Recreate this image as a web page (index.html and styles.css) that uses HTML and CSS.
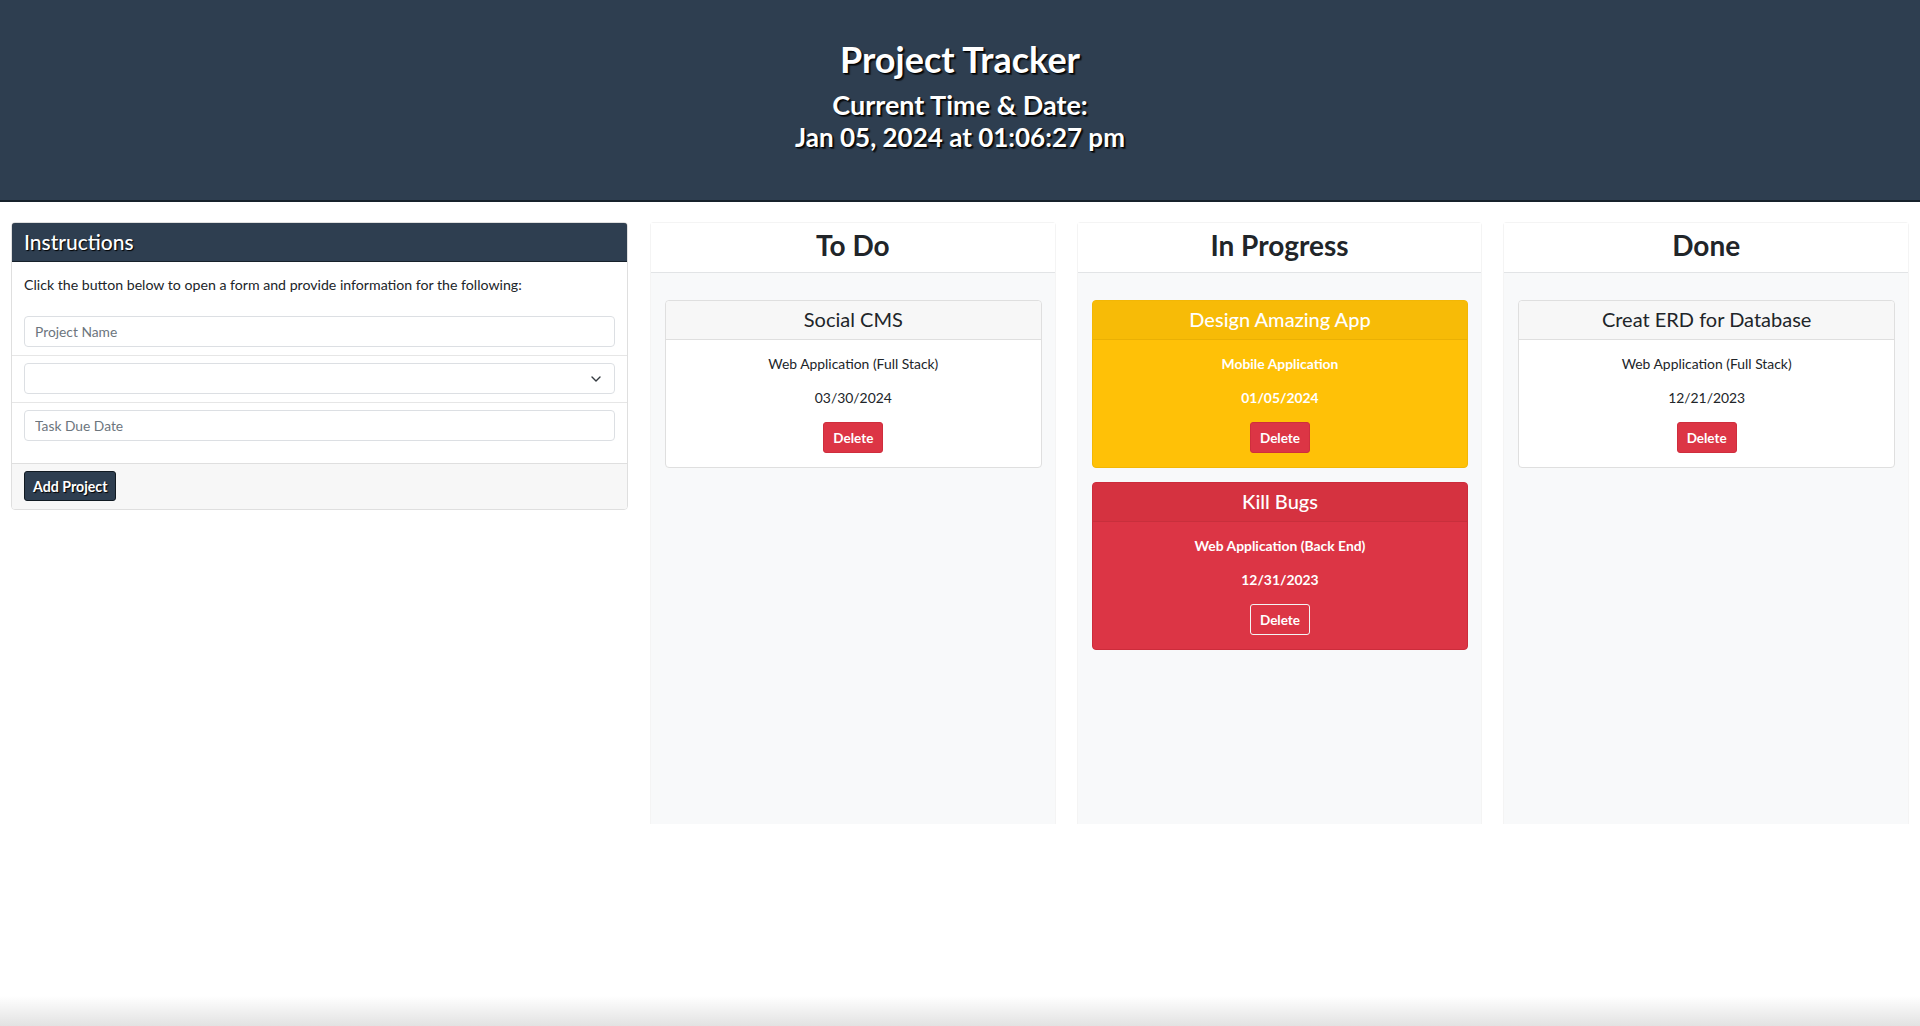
FILE: index.html
```html
<!DOCTYPE html>
<html lang="en">
<head>
<meta charset="utf-8">
<title>Project Tracker</title>
<link rel="stylesheet" href="styles.css">
</head>
<body>
<header class="top">
  <h1 class="top-title">Project Tracker</h1>
  <h2 class="top-sub first">Current Time &amp; Date:</h2>
  <h2 class="top-sub second">Jan 05, 2024 at 01:06:27 pm</h2>
</header>

<main class="main">
  <section class="side">
    <div class="card">
      <div class="card-head dark">Instructions</div>
      <div class="card-body">
        <p class="intro">Click the button below to open a form and provide information for the following:</p>
        <input class="field" type="text" placeholder="Project Name">
      </div>
      <div class="list-item">
        <div class="select-wrap">
          <select class="field select"><option></option></select>
          <svg class="chev" width="10" height="6" viewBox="0 0 10 6"><path d="M1 1l4 4 4-4" fill="none" stroke="#343a40" stroke-width="1.4" stroke-linecap="round" stroke-linejoin="round"/></svg>
        </div>
      </div>
      <div class="list-item last">
        <input class="field" type="text" placeholder="Task Due Date">
      </div>
      <div class="card-foot">
        <button class="btn-dark">Add Project</button>
      </div>
    </div>
  </section>

  <section class="board">
    <div class="lane-col">
      <div class="lane">
        <div class="lane-head">To Do</div>
        <div class="lane-body">
          <div class="task">
            <div class="task-head">Social CMS</div>
            <div class="task-body">
              <p>Web Application (Full Stack)</p>
              <p>03/30/2024</p>
              <button class="btn-del">Delete</button>
            </div>
          </div>
        </div>
      </div>
    </div>
    <div class="lane-col">
      <div class="lane">
        <div class="lane-head">In Progress</div>
        <div class="lane-body">
          <div class="task warn">
            <div class="task-head">Design Amazing App</div>
            <div class="task-body">
              <p>Mobile Application</p>
              <p>01/05/2024</p>
              <button class="btn-del">Delete</button>
            </div>
          </div>
          <div class="task danger">
            <div class="task-head">Kill Bugs</div>
            <div class="task-body">
              <p>Web Application (Back End)</p>
              <p>12/31/2023</p>
              <button class="btn-del light">Delete</button>
            </div>
          </div>
        </div>
      </div>
    </div>
    <div class="lane-col">
      <div class="lane">
        <div class="lane-head">Done</div>
        <div class="lane-body">
          <div class="task">
            <div class="task-head">Creat ERD for Database</div>
            <div class="task-body">
              <p>Web Application (Full Stack)</p>
              <p>12/21/2023</p>
              <button class="btn-del">Delete</button>
            </div>
          </div>
        </div>
      </div>
    </div>
  </section>
</main>
</body>
</html>
```

FILE: styles.css
```css
* { box-sizing: border-box; }

html {
  min-height: 100%;
  background: linear-gradient(to bottom, #ffffff 0, #ffffff 996px, #e2e2e2 1026px);
}

body {
  margin: 0;
  font-family: Lato, "Open Sans", sans-serif;
  font-size: 14px;
  color: #212529;
}

/* ---------- header ---------- */
.top {
  background: #2e3e50;
  border-bottom: 2px solid #17212b;
  height: 202px;
  padding-top: 38px;
  text-align: center;
  color: #fff;
  text-shadow: 1px 1px 1px #000, 2px 2px 1px rgba(0,0,0,0.6);
}
.top-title {
  margin: 0;
  font-size: 36px;
  line-height: 43px;
  font-weight: 700;
}
.top-sub {
  margin: 0;
  font-size: 27px;
  line-height: 32px;
  font-weight: 700;
}
.top-sub.first { margin-top: 8px; }
.top-sub.second { font-size: 26px; }

/* ---------- layout ---------- */
.main {
  display: flex;
  padding-top: 20px;
}
.side {
  width: 33.3333%;
  padding: 0 12px 0 11px;
}
.board {
  flex: 1;
  display: grid;
  grid-template-columns: repeat(3, 1fr);
}
.lane-col {
  padding: 0 11px 0 10px;
}

/* ---------- instructions card ---------- */
.card {
  border: 1px solid #dfdfdf;
  border-radius: 4px;
  background: #fff;
  overflow: hidden;
}
.card-head.dark {
  background: #2e3e50;
  border: 1px solid #17212b;
  border-radius: 4px 4px 0 0;
  margin: -1px -1px 0;
  height: 40px;
  padding: 0 12px;
  color: #fff;
  font-size: 21px;
  line-height: 38px;
  font-weight: 500;
  text-shadow: 1px 1px 1px #000;
}
.card-body {
  padding: 12px 12px 8px;
}
.intro {
  margin: 0 0 21px;
  font-size: 14.15px;
  line-height: 21px;
}
.field {
  display: block;
  width: 100%;
  height: 31px;
  border: 1px solid #dcdfe3;
  border-radius: 4px;
  background: #fff;
  padding: 0 10px;
  font-family: inherit;
  font-size: 13.8px;
  color: #212529;
}
.field::placeholder { color: #6c757d; }
.select {
  appearance: none;
  -webkit-appearance: none;
}
.select-wrap { position: relative; }
.chev {
  position: absolute;
  right: 14px;
  top: 13px;
}
.list-item {
  border-top: 1px solid #e6e6e6;
  padding: 7px 12px 8px;
}
.list-item.last { padding-bottom: 22px; }
.card-foot {
  background: #f7f7f7;
  border-top: 1px solid #dfdfdf;
  padding: 7px 12px 8px;
}
.btn-dark {
  height: 30px;
  padding: 0 8px;
  background: #2e3e50;
  border: 1px solid #111a22;
  border-radius: 3px;
  color: #fff;
  font-family: inherit;
  font-size: 14.2px;
  font-weight: 700;
  text-shadow: 1px 1px 1px #000;
}

/* ---------- lanes ---------- */
.lane {
  height: 602px;
  display: flex;
  flex-direction: column;
  border: 1px solid #f4f4f4;
  border-bottom: 0;
  border-radius: 4px 4px 0 0;
}
.lane-head {
  height: 50px;
  background: #fff;
  border-bottom: 1px solid #e2e4e6;
  text-align: center;
  font-size: 28px;
  line-height: 44px;
  font-weight: 700;
  color: #212529;
}
.lane-body {
  flex: 1;
  background: #f8f9fa;
  padding: 27px 13px 0 14px;
  display: flex;
  flex-direction: column;
  gap: 14px;
}

/* ---------- task cards ---------- */
.task {
  background: #fff;
  border: 1px solid #dfdfdf;
  border-radius: 4px;
  text-align: center;
}
.task-head {
  background: #f7f7f7;
  border-bottom: 1px solid #dfdfdf;
  border-radius: 4px 4px 0 0;
  height: 39px;
  font-size: 20px;
  line-height: 37px;
  font-weight: 400;
}
.task-body {
  padding: 14px 16px 14px;
}
.task-body p {
  margin: 0 0 14px;
  font-size: 13.9px;
  line-height: 20px;
}
.btn-del {
  height: 31px;
  padding: 0 9px;
  background: #dc3545;
  border: 1px solid #cf2e3d;
  border-radius: 3px;
  color: #fff;
  font-family: inherit;
  font-size: 13.5px;
  font-weight: 700;
  vertical-align: top;
}
.btn-del.light { border-color: #f4f4f4; }

.task.warn {
  background: #ffc107;
  border-color: #f2b705;
  color: #fff;
}
.task.warn .task-head {
  background: #f7bb07;
  border-bottom-color: #eab004;
  font-weight: 500;
}
.task.danger {
  background: #dc3545;
  border-color: #cc2c3b;
  color: #fff;
}
.task.danger .task-head {
  background: #d53240;
  border-bottom-color: #c82f3c;
  font-weight: 500;
}
.task.warn p, .task.danger p { font-weight: 700; }
```
